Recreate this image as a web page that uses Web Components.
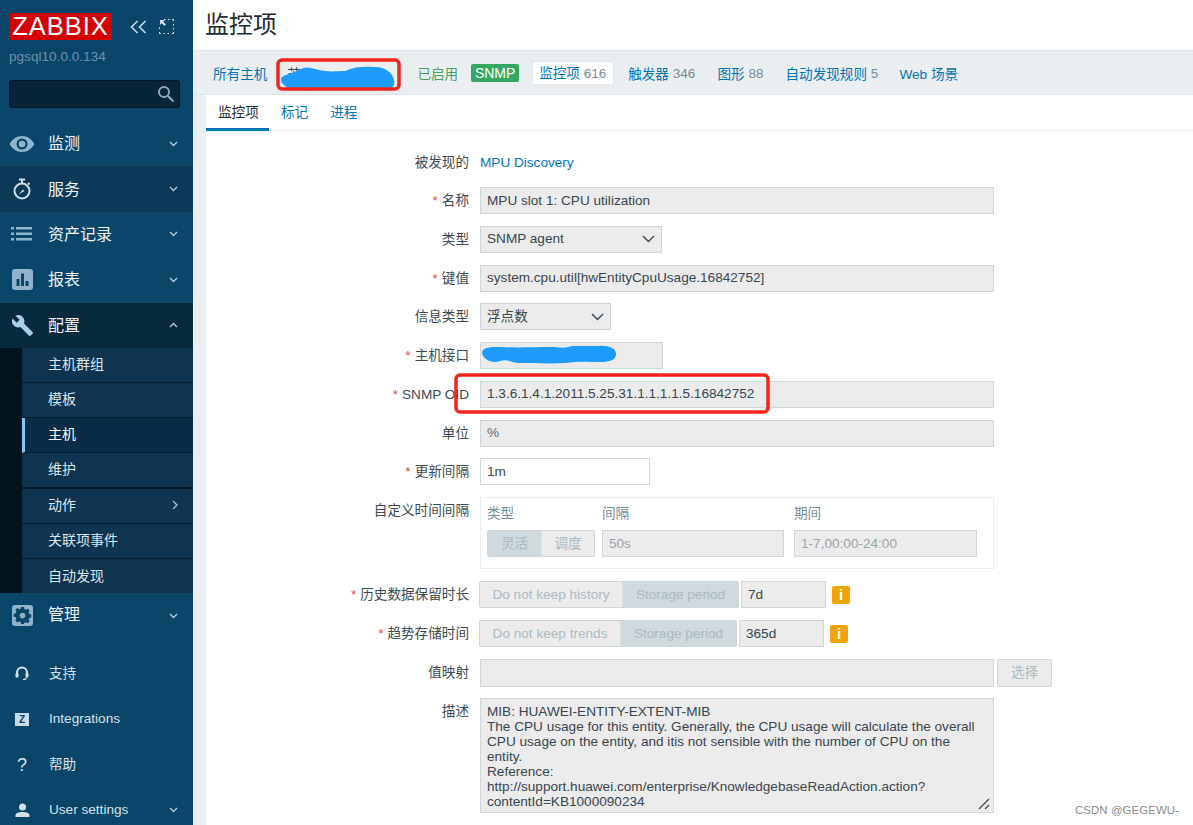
<!DOCTYPE html>
<html lang="zh">
<head>
<meta charset="utf-8">
<title>监控项</title>
<style>
html,body{margin:0;padding:0;width:1193px;height:825px;overflow:hidden;background:#fff;}
body{font:13.6px "Liberation Sans","Noto Sans CJK SC",sans-serif;color:#1f2c33;}
</style>
</head>
<body>
<z-app>
  <z-sidebar slot="side">
    <z-nav label="监测" icon="eye"></z-nav>
    <z-nav label="服务" icon="watch" state="hover"></z-nav>
    <z-nav label="资产记录" icon="list"></z-nav>
    <z-nav label="报表" icon="chart"></z-nav>
    <z-nav label="配置" icon="wrench" state="open"></z-nav>
    <z-submenu>
      <z-subitem>主机群组</z-subitem>
      <z-subitem>模板</z-subitem>
      <z-subitem active>主机</z-subitem>
      <z-subitem thick>维护</z-subitem>
      <z-subitem arrow>动作</z-subitem>
      <z-subitem>关联项事件</z-subitem>
      <z-subitem last>自动发现</z-subitem>
    </z-submenu>
    <z-nav label="管理" icon="gear" lift></z-nav>
    <z-nav label="支持" icon="headset" small style="margin-top:12.5px"></z-nav>
    <z-nav label="Integrations" icon="zeta" small></z-nav>
    <z-nav label="帮助" icon="help" small></z-nav>
    <z-nav label="User settings" icon="user" small chev></z-nav>
  </z-sidebar>
  <z-main slot="main">
    <z-hostnav></z-hostnav>
    <z-tabs></z-tabs>
    <z-form>
      <z-row label="被发现的" style="box-sizing:border-box;padding-top:1px"><a style="color:#0275b8;text-decoration:none">MPU Discovery</a></z-row>
      <z-row label="名称" req><z-input w="514" value="MPU slot 1: CPU utilization"></z-input></z-row>
      <z-row label="类型"><z-input w="182" value="SNMP agent" select></z-input></z-row>
      <z-row label="键值" req><z-input w="514" value="system.cpu.util[hwEntityCpuUsage.16842752]"></z-input></z-row>
      <z-row label="信息类型"><z-input w="131" value="浮点数" select></z-input></z-row>
      <z-row label="主机接口" req><z-input w="183" value=""></z-input></z-row>
      <z-row label="SNMP OID" req><z-input w="514" value="1.3.6.1.4.1.2011.5.25.31.1.1.1.1.5.16842752"></z-input></z-row>
      <z-row label="单位"><z-input w="514" value="%" dim></z-input></z-row>
      <z-row label="更新间隔" req><z-input w="170" value="1m" white></z-input></z-row>
      <z-row label="自定义时间间隔" tall="72.5"><z-custom></z-custom></z-row>
      <z-row label="历史数据保留时长" req shift>
        <z-seg a="Do not keep history" b="Storage period" wa="143" wb="117"></z-seg><z-input w="85" value="7d" style="margin-left:2px"></z-input><z-info></z-info>
      </z-row>
      <z-row label="趋势存储时间" req shift>
        <z-seg a="Do not keep trends" b="Storage period" wa="141" wb="117"></z-seg><z-input w="85" value="365d" style="margin-left:2px"></z-input><z-info></z-info>
      </z-row>
      <z-row label="值映射" tall28><z-input w="514" value="" h="28"></z-input><z-disbtn>选择</z-disbtn></z-row>
      <z-row label="描述" tall="115"><z-textarea>MIB: HUAWEI-ENTITY-EXTENT-MIB
The CPU usage for this entity. Generally, the CPU usage will calculate the overall CPU usage on the entity, and itis not sensible with the number of CPU on the entity.
Reference:
http://support.huawei.com/enterprise/KnowledgebaseReadAction.action?contentId=KB1000090234</z-textarea></z-row>
    </z-form>
  </z-main>
  <z-marks slot="over"></z-marks>
</z-app>
<script>
function def(name, html, init){
  customElements.define(name, class extends HTMLElement{
    connectedCallback(){
      if(this.shadowRoot) return;
      const r=this.attachShadow({mode:'open'});
      r.innerHTML = typeof html==='function' ? html(this) : html;
      if(init) init(this,r);
    }
  });
}
const ICONS={
 eye:`<svg width="26" height="18" viewBox="0 0 26 18"><path fill="#8fb3cb" fill-rule="evenodd" d="M13 1C7.5 1 3 4.3.6 9 3 13.700 7.500 17 13 17s10-3.300 12.400-8C23 4.300 18.500 1 13 1zm0 2.500A5.500 5.500 0 1 1 13 14.500 5.500 5.500 0 0 1 13 3.500z"/><circle cx="13" cy="9" r="3.300" fill="#8fb3cb"/></svg>`,
 watch:`<svg width="20" height="22" viewBox="0 0 20 22"><g fill="none" stroke="#cfdde6" stroke-width="2"><circle cx="10" cy="13" r="7.500"/><path d="M7 1.500h6M10 2v3M16 5l1.500 1.500"/></g><path d="M6.500 16.500 11 11.500l1.500 1.500z" fill="#cfdde6"/></svg>`,
 list:`<svg width="22" height="14" viewBox="0 0 22 14"><g fill="#8fb3cb"><rect x="0" y="0" width="3" height="2.500"/><rect x="0" y="5.500" width="3" height="2.500"/><rect x="0" y="11" width="3" height="2.500"/><rect x="5" y="0" width="16" height="2.500"/><rect x="5" y="5.500" width="16" height="2.500"/><rect x="5" y="11" width="16" height="2.500"/></g></svg>`,
 chart:`<svg width="21" height="21" viewBox="0 0 21 21"><rect width="21" height="21" rx="3" fill="#8fb3cb"/><g fill="#0a466a"><rect x="4.500" y="10" width="3" height="7"/><rect x="9" y="4.500" width="3" height="12.500"/><rect x="13.500" y="12" width="3" height="5"/></g></svg>`,
 wrench:`<svg width="23" height="23" viewBox="0 0 24 24"><path fill="#a9cfe6" d="M22.700 19l-9.100-9.100c.9-2.300.4-5-1.500-6.900-2-2-5-2.400-7.400-1.300L9 6 6 9 1.600 4.700C.4 7.100.9 10.100 2.900 12.100c1.900 1.900 4.600 2.400 6.900 1.500l9.100 9.100c.4.400 1 .4 1.400 0l2.300-2.300c.5-.4.5-1.100.1-1.400z"/></svg>`,
 gear:`<svg width="21" height="21" viewBox="0 0 21 21"><rect width="21" height="21" rx="3" fill="#8fb3cb"/><path fill="#0a466a" fill-rule="evenodd" d="M9 3h3l.4 2 1.500.7 1.800-1 2 2.100-1 1.700.6 1.500 2 .5v3l-2 .4-.6 1.500 1 1.800-2 2-1.800-1-1.500.6L12 20H9l-.4-2-1.500-.6-1.800 1-2-2 1-1.800-.6-1.500-2-.4v-3l2-.5.6-1.500-1-1.700 2-2.100 1.800 1L8.600 5zM10.500 8.800a2.800 2.800 0 1 0 0 5.600 2.800 2.800 0 0 0 0-5.600z" transform="translate(0 -1)"/></svg>`,
 headset:`<svg width="14" height="15" viewBox="0 0 14 15"><path fill="none" stroke="#d5e1e9" stroke-width="2" d="M2 9V6.500a5 5 0 0 1 10 0V9"/><rect x="0.500" y="7" width="3" height="4.500" rx="1" fill="#d5e1e9"/><rect x="10.500" y="7" width="3" height="4.500" rx="1" fill="#d5e1e9"/><path d="M11.500 11.500c0 1.500-1.500 2-3.500 2" fill="none" stroke="#d5e1e9" stroke-width="1.200"/></svg>`,
 zeta:`<span style="display:flex;width:14px;height:13px;background:#c9dbe6;color:#0a466a;font:bold 10px/13px 'Liberation Sans',sans-serif;align-items:center;justify-content:center">Z</span>`,
 help:`<span style="color:#d5e1e9;font:18px/18px 'Liberation Sans',sans-serif">?</span>`,
 user:`<svg width="15" height="14" viewBox="0 0 15 14"><circle cx="7.500" cy="4" r="3.500" fill="#d5e1e9"/><path d="M0.500 14v-1.500c0-2.500 3-3.500 7-3.500s7 1 7 3.500V14z" fill="#d5e1e9"/></svg>`
};
const chev=(up,col)=>`<svg width="9" height="6" viewBox="0 0 9 6"><path d="${up?'M1 5l3.500-3.500L8 5':'M1 1l3.500 3.500L8 1'}" fill="none" stroke="${col}" stroke-width="1.300"/></svg>`;

def('z-app',`<style>:host{display:block;width:1193px;height:825px;position:relative;overflow:hidden}
.w{display:flex;height:100%}.m{flex:1;min-width:0}</style>
<div class="w"><slot name="side"></slot><div class="m"><slot name="main"></slot></div></div><slot name="over"></slot>`);

def('z-sidebar',`<style>
:host{display:flex;flex-direction:column;width:193px;flex:none;height:825px;overflow:hidden;background:#0a466a}
.top{height:121px;flex:none;position:relative;box-sizing:border-box;padding:13px 9px 0}
.toprow{display:flex;align-items:center;height:27px}
.logo{width:103px;height:27px;background:#d40000;color:#fff;font:25.500px/27px "Liberation Sans",sans-serif;text-align:center;letter-spacing:1px;flex:none;margin-right:18px}
.tools{display:flex;align-items:center;gap:12px}
.host{color:#6b93ab;font-size:13.6px;margin-top:8px;line-height:18px}
.search{margin-top:14px;height:28px;width:171px;box-sizing:border-box;background:#082537;border:1px solid #051722;border-radius:3px;display:flex;justify-content:flex-end;align-items:center;padding-right:4px}
</style>
<div class="top">
 <div class="toprow"><div class="logo">ZABBIX</div>
  <div class="tools">
   <svg width="17" height="14" viewBox="0 0 17 14"><path d="M7.500 1 1.500 7l6 6M15.500 1l-6 6 6 6" fill="none" stroke="#cfe0ea" stroke-width="1.500"/></svg>
   <svg width="15" height="15" viewBox="0 0 15 15"><path d="M5 .5h1.500M9 .5h1.500M13 .5h1.500V2M14.500 5v1.500M14.500 9v1.500M14.500 13v1.500H13M10 14.500H8.500M6 14.500H4.500M2 14.500H.5V13M.5 10V8.500" fill="none" stroke="#cfe0ea"/><path d="M1 1h5L4.300 2.700 7 5.500 5.500 7 2.700 4.300 1 6z" fill="#cfe0ea"/></svg>
  </div></div>
 <div class="host">pgsql10.0.0.134</div>
 <div class="search"><svg width="18" height="18" viewBox="0 0 18 18"><circle cx="7" cy="7" r="5" fill="none" stroke="#8aa9bc" stroke-width="2"/><path d="M11 11l5.500 5.500" stroke="#8aa9bc" stroke-width="2.200"/></svg></div>
</div><slot></slot>`);

def('z-nav',h=>{
  const st=h.getAttribute('state'), small=h.hasAttribute('small');
  const bg=st==='hover'?'#0a3a57':st==='open'?'#082a3c':'transparent';
  const showChev=!small||h.hasAttribute('chev');
  const pad=small?'0':h.hasAttribute('lift')?'0 0 2px':'1px 0 0';
  return `<style>:host{display:flex;height:${small?45.5:45.4}px;flex:none;align-items:center;background:${bg};position:relative;color:${small?'#d5e1e9':'#eef3f6'};font-size:${small?13.6:16}px}
  .i{width:44px;height:100%;display:flex;align-items:center;justify-content:center;flex:none}
  .l{margin-left:${small?5:4}px;flex:1;white-space:nowrap;line-height:${small?'18px':'20px'};padding:${pad}}
  .c{width:13px;display:flex;margin-right:13px;justify-content:center}</style>
  <div class="i">${ICONS[h.getAttribute('icon')]}</div><div class="l">${h.getAttribute('label')}</div>
  ${showChev?`<div class="c">${chev(st==='open','#b9cbd7')}</div>`:''}`;
});

def('z-submenu',`<style>:host{display:block;flex:none;height:245px;background:#04141e;padding-left:22px}
.b{display:flex;flex-direction:column}</style><div class="b"><slot></slot></div>`);

def('z-subitem',h=>{
 const act=h.hasAttribute('active'),thick=h.hasAttribute('thick'),last=h.hasAttribute('last');
 return `<style>:host{display:flex;height:${thick?36:last?34:35}px;box-sizing:border-box;align-items:center;background:${act?'#0a2d45':'#0e344f'};color:${act?'#fff':'#dbe5ec'};font-size:14px;line-height:18px;padding-left:${act?'23px':'26px'};padding-bottom:${last?0:1}px;border-bottom:${last?0:thick?2:1}px solid #071c2a;position:relative;${act?'border-left:3px solid #86c8f5;':''}}
.t{flex:1}.a{margin-right:15px;display:flex}</style><span class="t"><slot></slot></span>
${h.hasAttribute('arrow')?`<span class="a"><svg width="6" height="10" viewBox="0 0 6 10"><path d="M1 1l4 4-4 4" fill="none" stroke="#a9bdca" stroke-width="1.300"/></svg></span>`:''}`;
});

def('z-main',`<style>:host{display:block;height:825px;background:#fff;overflow:hidden}
.title{height:50px;box-sizing:border-box;padding-left:12px;display:flex;align-items:center;font-size:24px;color:#1f2c33;padding-bottom:0;line-height:30px}
.body{background:#ebeef0;border-top:1px solid #dfe4e7;padding-left:13px;}</style>
<div class="title">监控项</div><div class="body"><slot></slot></div>`);

def('z-hostnav',`<style>
:host{display:flex;height:44px;align-items:center;margin-left:-13px;padding-left:20px;background:#ebeef0;font-size:13.6px;white-space:nowrap;box-shadow:inset 0 -1px 0 #dfe4e7}
a{color:#0275b8;text-decoration:none}
.n{color:#768d99}
.en{color:#4aa15b;margin-left:150px}
.b{margin-left:13px;width:48px;height:18px;background:#34a862;color:#fff;border-radius:2px;text-align:center;line-height:19px;font-size:14px}
.cur{margin-left:13px;height:24px;box-sizing:border-box;width:82px;background:#fff;border:1px solid #e3e8eb;border-radius:2px;padding-left:6px;line-height:23px}
</style>
<a>所有主机</a><span class="en">已启用</span><span class="b">SNMP</span>
<span class="cur"><a>监控项</a> <span class="n">616</span></span>
<a style="margin-left:14px">触发器</a>&nbsp;<span class="n">346</span>
<a style="margin-left:22px">图形</a>&nbsp;<span class="n">88</span>
<a style="margin-left:22px">自动发现规则</a>&nbsp;<span class="n">5</span>
<a style="margin-left:21px">Web 场景</a>`);

def('z-tabs',`<style>:host{display:flex;height:36px;box-sizing:border-box;background:#fff;border-bottom:1px solid #ebeef0;font-size:13.6px}
a{color:#0275b8;padding:0 12px;line-height:35px;height:36px;box-sizing:border-box;flex:none}
a.on{color:#1f2c33;border-bottom:3px solid #0275b8;width:63px;padding:0 0 0 12px}
</style><a class="on">监控项</a><a>标记</a><a style="padding-left:10px">进程</a>`);

def('z-form',`<style>:host{display:flex;flex-direction:column;gap:11.75px;background:#fff;padding-top:17.25px;height:700px;font-size:13.6px}</style><slot></slot>`);

def('z-row',h=>`<style>:host{display:grid;grid-template-columns:263px 1fr;column-gap:11px;height:${h.getAttribute('tall')||(h.hasAttribute('tall28')?27.5:27)}px;flex:none}
.l{text-align:right;line-height:27px;color:#3c4a52;white-space:nowrap}
.r{color:#e8474a;margin-right:4px}
.f{display:flex;line-height:18px;align-items:${h.hasAttribute('tall')?'stretch':'center'};${h.hasAttribute('shift')?'margin-left:-1px;':''}}</style>
<div class="l">${h.hasAttribute('req')?'<span class="r">*</span>':''}${h.getAttribute('label')}</div><div class="f"><slot></slot></div>`);

def('z-input',h=>{
  const w=h.getAttribute('w'),sel=h.hasAttribute('select'),white=h.hasAttribute('white');
  const H=h.getAttribute('h')||27, dim=h.hasAttribute('dim'),faint=h.hasAttribute('faint');
  return `<style>:host{display:flex;align-items:center;justify-content:space-between;box-sizing:border-box;width:${w}px;height:${H}px;flex:none;background:${white?'#fff':'#ebebeb'};border:1px solid ${sel?'#ccd5d9':'#d0d8dc'};padding:0 6px;color:${faint?'#9aa5ab':dim?'#5d6a72':'#3a4750'};font-size:13.6px;line-height:18px;white-space:nowrap}
  </style><span>${h.getAttribute('value')}</span>${sel?'<svg width="13" height="8" viewBox="0 0 13 8"><path d="M1 1l5.500 5.500L12 1" fill="none" stroke="#3a4750" stroke-width="1.400"/></svg>':''}`;
});

def('z-seg',h=>`<style>:host{display:flex;height:27px;flex:none;box-sizing:border-box;border:1px solid #ccd5d9;border-radius:2px;overflow:hidden;color:#acbbc2;font-size:13.6px;line-height:18px;white-space:nowrap}
.x{display:flex;align-items:center;justify-content:center;box-sizing:border-box}
.a{background:#ebebeb;width:${h.getAttribute('wa')}px;border-right:1px solid #dce2e5}.b{background:#d0d9dd;width:${h.getAttribute('wb')-2}px}
</style><div class="x a">${h.getAttribute('a')}</div><div class="x b">${h.getAttribute('b')}</div>`);

def('z-info',`<style>:host{display:flex;width:18px;height:18px;margin-left:6px;background:#f1a30c;border-radius:2px;color:#fff;align-items:center;justify-content:center;flex:none;font:bold 15px/18px "Liberation Sans",sans-serif}</style>i`);

def('z-disbtn',`<style>:host{display:flex;width:55px;height:28px;box-sizing:border-box;margin-left:3px;background:#ebebeb;border:1px solid #d0d8dc;border-radius:2px;color:#acbbc2;align-items:center;justify-content:center;flex:none;font-size:13.6px;line-height:18px}</style><slot></slot>`);

def('z-custom',`<style>:host{display:grid;box-sizing:border-box;width:514px;height:72px;border:1px solid #ebeef0;padding:7px 16px 0 6px;grid-template-columns:108px 182px 183px;column-gap:7px;grid-template-rows:17px 27px;row-gap:8px;color:#768d99;font-size:13.6px;line-height:17px}
.s{display:flex;box-sizing:border-box;width:108px;height:27px;border:1px solid #ccd5d9;border-radius:2px;overflow:hidden;color:#acbbc2}
.s div{display:flex;align-items:center;justify-content:center;padding-bottom:1px}
.s div:first-child{width:53px;background:#d0d9dd}.s div:last-child{flex:1;background:#ebebeb;border-left:1px solid #dce2e5}
</style><div>类型</div><div>间隔</div><div style="margin-left:3px">期间</div>
<div class="s"><div>灵活</div><div>调度</div></div>
<z-input w="182" value="50s" faint></z-input><z-input w="183" value="1-7,00:00-24:00" faint style="margin-left:3px"></z-input>`);

def('z-textarea',`<style>:host{display:block;position:relative;box-sizing:border-box;width:514px;height:115px;background:#ebebeb;border:1px solid #d0d8dc;padding:5px 6px 0;line-height:15px;color:#3a4750;font-size:13.6px;white-space:pre-wrap;overflow:hidden;word-break:break-word}
svg{position:absolute;right:3px;bottom:2px}</style><slot></slot><svg width="12" height="12" viewBox="0 0 12 12"><path d="M1 11 11 1M7 11l4-4" stroke="#444" stroke-width="1.200"/></svg>`);

def('z-marks',`<style>:host{position:absolute;inset:0;display:block;pointer-events:none}
.w{position:absolute;right:14px;top:803px;font-size:11.4px;color:#8a8a8a;line-height:14px;letter-spacing:.1px}
svg{position:absolute;left:0;top:0}
.p{position:absolute;left:287px;top:65px;color:#3c4a52;font-size:14px;line-height:18px}
</style><span class="p">苏</span><svg width="1193" height="825">
<g fill="#1e9bff"><path d="M281 79c1-5 12-5 22-11 6-2 14 2 22 3 8 1 14 0 20 0 8-4 18-5 30-4 10 0 18 6 19 13 1 6-2 11-10 10-16 1-30-1-46 0-14 0-32 1-42 0-8-1-15-5-15-11z"/>
<path d="M482 352c2-5 8-5 18-5 16 1 36 0 54 0 8 1 12 1 18-1l26 0c10-1 18 2 18 8 0 6-6 8-16 8-10 0-22-1-34 1-16 1-34 0-48 0-8-1-10-4-18-2-8 3-18-2-18-9z"/></g>
<rect x="278" y="60" width="121" height="29" rx="4" fill="none" stroke="#f5231c" stroke-width="3.5"/>
<rect x="456" y="375" width="312" height="37" rx="4" fill="none" stroke="#f5231c" stroke-width="3.5"/>
</svg><span class="w">CSDN @GEGEWU-</span>`);
</script>
</body>
</html>
